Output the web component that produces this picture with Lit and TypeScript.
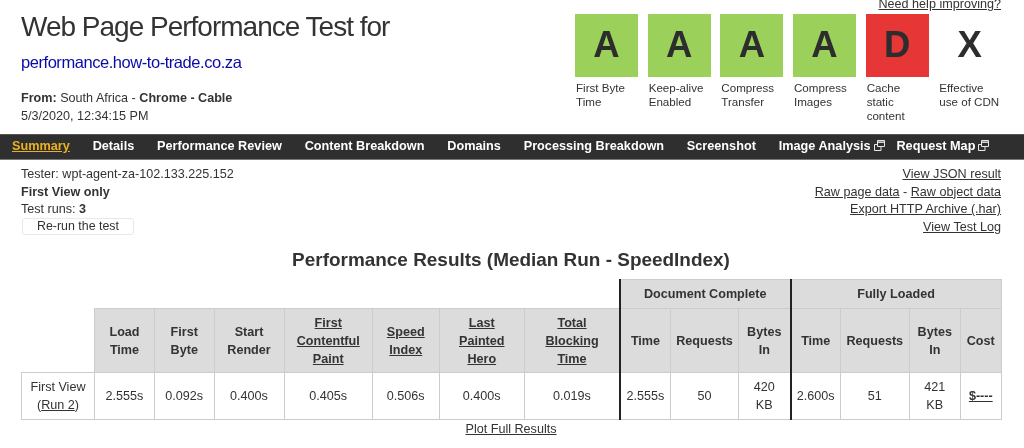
import { LitElement, html, css, svg } from "lit";
import { customElement } from "lit/decorators.js";

const grades = [
  ["A", "g", "First Byte", "Time"],
  ["A", "g", "Keep-alive", "Enabled"],
  ["A", "g", "Compress", "Transfer"],
  ["A", "g", "Compress", "Images"],
  ["D", "r", "Cache", "static", "content"],
  ["X", "n", "Effective", "use of CDN"],
];

const ext = svg`<svg class="ext" width="11" height="11" viewBox="0 0 11 11" fill="none" stroke="#e8e8e8" stroke-width="1"><path d="M3.5 .5h7v6h-7z"/><path d="M3.5 2.2h7" stroke-width="1.4"/><path d="M3.5 4.5h-3v6h6.5v-4"/></svg>`;

@customElement("app-root")
export class AppRoot extends LitElement {
  static styles = css`
    :host { display: block; width: 1024px; height: 448px; overflow: hidden; background: #fff; color: #333; font-family: "Liberation Sans", Arial, sans-serif; font-size: 12.6px; line-height: 17.6px; filter: blur(0.3px); }
    a { color: inherit; text-decoration: underline; }
    .top { display: flex; justify-content: space-between; height: 134px; box-sizing: border-box; padding: 0 23px 0 21px; }
    h1 { margin: 9px 0 0; font-size: 28px; line-height: 36px; font-weight: 400; white-space: nowrap; letter-spacing: -1px; }
    .url { margin-top: 6px; font-size: 16.5px; line-height: 22px; color: #0a0aa8; letter-spacing: -0.45px; }
    .from { margin-top: 17px; }
    .right { display: flex; flex-direction: column; align-items: flex-end; width: 426px; }
    .help { line-height: 10px; height: 14px; margin-top: -1px; white-space: nowrap; }
    .grades { display: flex; gap: 9.67px; width: 426px; margin-top: 1px; }
    .grade { width: 63px; flex: none; }
    .box { width: 63px; height: 63px; display: flex; align-items: center; justify-content: center; padding-bottom: 2px; box-sizing: border-box; font-size: 36.5px; font-weight: 700; color: #2d2d2d; margin-bottom: 4px; }
    .g { background: #9bd05a; }
    .r { background: #e63636; }
    .n { background: #fff; }
    .lab { font-size: 11.6px; line-height: 14px; white-space: nowrap; padding-left: 1px; }
    nav { height: 26px; box-sizing: border-box; background: #2f2f2f; border-top: 1px solid #555; border-bottom: 1px solid #777; display: flex; align-items: center; gap: 22.8px; padding-left: 12px; font-size: 12.7px; font-weight: 700; color: #fff; white-space: nowrap; }
    nav span { display: flex; align-items: center; }
    nav .ext { margin: -4px 0 0 3px; }
    nav .sel { color: #e9b320; text-decoration: underline; }
    nav .ia { margin-right: -11px; }
    .info { display: flex; justify-content: space-between; box-sizing: border-box; padding: 6px 23px 0 21px; height: 89px; }
    .rt { text-align: right; }
    button { display: block; width: 112px; height: 17px; box-sizing: border-box; margin: -1px 0 0 1px; padding: 0; border: 1px solid #e8e8e8; border-radius: 3px; background: #fff; font: 12.4px/14px "Liberation Sans", Arial, sans-serif; color: #333; }
    h2 { margin: 0; padding-right: 2px; font-size: 18.95px; line-height: 22px; font-weight: 700; text-align: center; height: 30px; }
    .tw { padding-left: 21px; width: 980px; }
    table { border-collapse: collapse; table-layout: fixed; width: 980px; }
    th, td { border: 1px solid #ccc; text-align: center; padding: 0; font-size: 12.6px; line-height: 18px; vertical-align: middle; }
    th { background: #dcdcdc; font-weight: 700; }
    .r1 { height: 29px; }
    .r2 { height: 64px; }
    .r3 { height: 47px; }
    td.blank { background: #fff; border-top: 0; border-left: 0; border-bottom: 0; }
    .r2 td.blank { border-bottom: 1px solid #ccc; }
    .bl { border-left: 2px solid #222; }
    .c1 { width: 73px; } .c2 { width: 60px; } .c3 { width: 59.5px; } .c4 { width: 70px; } .c5 { width: 88.5px; } .c6 { width: 66.5px; } .c7 { width: 85.5px; } .c8 { width: 95.5px; }
    .c9 { width: 50.5px; } .c10 { width: 68px; } .c11 { width: 52px; } .c12 { width: 50px; } .c13 { width: 68.5px; } .c14 { width: 51.5px; } .c15 { width: 40.5px; }
    .plot { text-align: center; line-height: 18px; }
  `;

  render() {
    return html`
      <div class="top">
        <div>
          <h1>Web Page Performance Test for</h1>
          <div class="url">performance.how-to-trade.co.za</div>
          <div class="from"><b>From:</b> South Africa - <b>Chrome - Cable</b><br />5/3/2020, 12:34:15 PM</div>
        </div>
        <div class="right">
          <a class="help" href="#">Need help improving?</a>
          <div class="grades">
            ${grades.map(([l, c, ...t]) => html`<div class="grade"><div class="box ${c}">${l}</div><div class="lab">${t.map((x) => html`${x}<br />`)}</div></div>`)}
          </div>
        </div>
      </div>
      <nav>
        <span class="sel">Summary</span>
        <span>Details</span>
        <span>Performance Review</span>
        <span>Content Breakdown</span>
        <span>Domains</span>
        <span>Processing Breakdown</span>
        <span>Screenshot</span>
        <span class="ia">Image Analysis${ext}</span>
        <span>Request Map${ext}</span>
      </nav>
      <div class="info">
        <div>Tester: wpt-agent-za-102.133.225.152<br /><b>First View only</b><br />Test runs: <b>3</b><button>Re-run the test</button></div>
        <div class="rt"><a href="#">View JSON result</a><br /><a href="#">Raw page data</a> - <a href="#">Raw object data</a><br /><a href="#">Export HTTP Archive (.har)</a><br /><a href="#">View Test Log</a></div>
      </div>
      <h2>Performance Results (Median Run - SpeedIndex)</h2>
      <div class="tw">
        <table>
          <colgroup>
            ${[1,2,3,4,5,6,7,8,9,10,11,12,13,14,15].map((i) => html`<col class="c${i}" />`)}
          </colgroup>
          <tr class="r1"><td class="blank" colspan="8"></td><th class="bl" colspan="3">Document Complete</th><th class="bl" colspan="4">Fully Loaded</th></tr>
          <tr class="r2">
            <td class="blank"></td>
            <th>Load<br />Time</th><th>First<br />Byte</th><th>Start<br />Render</th>
            <th><a href="#">First<br />Contentful<br />Paint</a></th>
            <th><a href="#">Speed<br />Index</a></th>
            <th><a href="#">Last<br />Painted<br />Hero</a></th>
            <th><a href="#">Total<br />Blocking<br />Time</a></th>
            <th class="bl">Time</th><th>Requests</th><th>Bytes<br />In</th>
            <th class="bl">Time</th><th>Requests</th><th>Bytes<br />In</th><th>Cost</th>
          </tr>
          <tr class="r3">
            <td>First View<br />(<a href="#">Run 2</a>)</td>
            <td>2.555s</td><td>0.092s</td><td>0.400s</td><td>0.405s</td><td>0.506s</td><td>0.400s</td><td>0.019s</td>
            <td class="bl">2.555s</td><td>50</td><td>420<br />KB</td>
            <td class="bl">2.600s</td><td>51</td><td>421<br />KB</td><td><a href="#"><b>$----</b></a></td>
          </tr>
        </table>
        <div class="plot"><a href="#">Plot Full Results</a></div>
      </div>
    `;
  }
}
